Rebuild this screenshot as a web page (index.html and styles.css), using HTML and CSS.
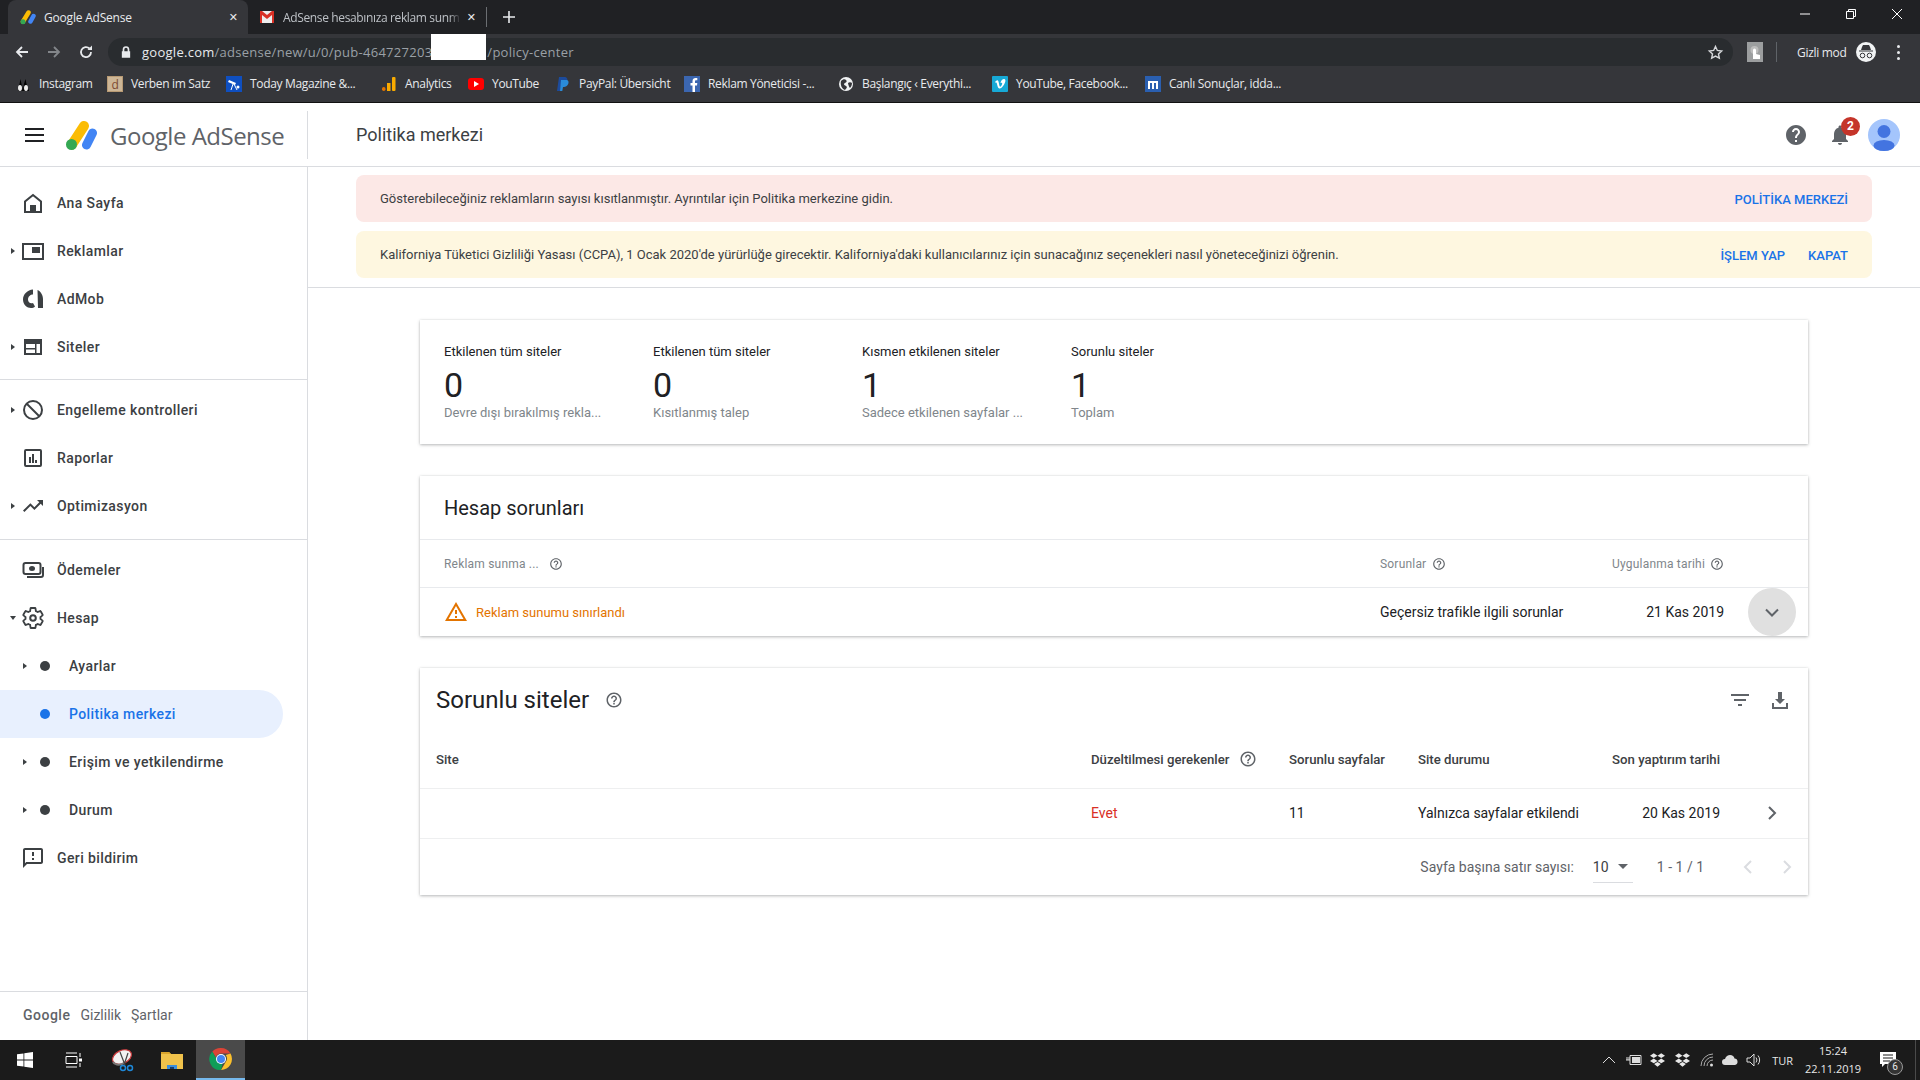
FILE: index.html
```html
<!DOCTYPE html>
<html lang="tr">
<head>
  <meta charset="UTF-8">
  <meta name="viewport" content="width=device-width, initial-scale=1.0">
  <title>Google AdSense</title>
  <link rel="stylesheet" href="styles.css">
</head>
<body>
  <svg class="sprite" width="0" height="0">
    <symbol id="help" viewBox="0 0 24 24"><path d="M11 18h2v-2h-2v2zm1-16C6.48 2 2 6.48 2 12s4.48 10 10 10 10-4.48 10-10S17.52 2 12 2zm0 18c-4.41 0-8-3.59-8-8s3.59-8 8-8 8 3.59 8 8-3.59 8-8 8zm0-14c-2.21 0-4 1.79-4 4h2c0-1.1.9-2 2-2s2 .9 2 2c0 2-3 1.75-3 5h2c0-2.25 3-2.5 3-5 0-2.21-1.79-4-4-4z"/></symbol>
    <symbol id="dropbox" viewBox="0 0 20 18"><path d="M5 0l5 3.2L5 6.4 0 3.2zM15 0l5 3.2-5 3.2-5-3.2zM5 7l5 3.2-5 3.2-5-3.2zM15 7l5 3.2-5 3.2-5-3.2zM10 11.5l4.5 2.9L10 18l-4.500-3.600z"/></symbol>
  </svg>

  <!-- browser chrome -->
  <div class="tabstrip">
    <div class="tab tab-active">
      <svg class="fav" viewBox="0 0 32 30"><path d="M6 24L17 6" stroke="#fbbc04" stroke-width="9" stroke-linecap="round"/><path d="M21 24l6-11" stroke="#4285f4" stroke-width="9" stroke-linecap="round"/><circle cx="6" cy="24.500" r="5" fill="#34a853"/></svg>
      <span class="tab-title">Google AdSense</span>
      <span class="tab-close">✕</span>
    </div>
    <div class="tab tab-other">
      <svg class="fav" viewBox="0 0 16 16"><rect x="1" y="2" width="14" height="12" fill="#eee"/><path d="M1 2h2l5 4 5-4h2v12h-2V6L8 10 3 6v8H1z" fill="#d93025"/></svg>
      <span class="tab-title tab-fade">AdSense hesabınıza reklam sunm</span>
      <span class="tab-close">✕</span>
    </div>
    <span class="tab-sep"></span>
    <span class="tab-new">
      <svg viewBox="0 0 14 14" width="14" height="14"><path d="M7 1v12M1 7h12" stroke="#e8eaed" stroke-width="1.600"/></svg>
    </span>
    <div class="win-controls">
      <svg viewBox="0 0 12 12" width="12" height="12"><path d="M1 6h10" stroke="#fff"/></svg>
      <svg viewBox="0 0 12 12" width="12" height="12"><path d="M1.500 3.500h7v7h-7zM3.500 3.500v-2h7v7h-2" fill="none" stroke="#fff"/></svg>
      <svg viewBox="0 0 12 12" width="12" height="12"><path d="M1 1l10 10M11 1L1 11" stroke="#fff"/></svg>
    </div>
  </div>

  <div class="toolbar">
    <div class="nav-btns">
      <svg viewBox="0 0 16 16" width="16" height="16"><path d="M14 8H3M8 3L3 8l5 5" fill="none" stroke="#e8eaed" stroke-width="1.800"/></svg>
      <svg viewBox="0 0 16 16" width="16" height="16"><path d="M2 8h11M8 3l5 5-5 5" fill="none" stroke="#83868a" stroke-width="1.800"/></svg>
      <svg viewBox="0 0 16 16" width="16" height="16"><path d="M13 8a5 5 0 1 1-1.500-3.500" fill="none" stroke="#e8eaed" stroke-width="1.800"/><path d="M14 1.500V6H9.500z" fill="#e8eaed"/></svg>
    </div>
    <div class="omnibox">
      <svg class="lock" viewBox="0 0 12 14" width="10" height="12"><path d="M2 6V4a4 4 0 0 1 8 0v2h1v8H1V6zm2 0h4V4a2 2 0 0 0-4 0z" fill="#e8eaed"/></svg>
      <span class="url"><b>google.com</b>/adsense/new/u/0/pub-464727203<span class="url-gap"></span>/policy-center</span>
      <svg class="star" viewBox="0 0 24 24" width="17" height="17"><path d="M12 3.500l2.600 5.600 6.100.7-4.500 4.200 1.200 6L12 17l-5.400 3 1.200-6-4.500-4.200 6.100-.7z" fill="none" stroke="#d5d7da" stroke-width="2"/></svg>
    </div>
    <div class="toolbar-right">
      <span class="ext-icon">
        <svg viewBox="0 0 16 16" width="16" height="16"><circle cx="7.500" cy="6" r="4" fill="#bdbdbd"/><path d="M6 15V6a1.500 1.500 0 0 1 3 0v4l4 1v4z" fill="#fff"/></svg>
      </span>
      <span class="toolbar-sep"></span>
      <span class="incog-label">Gizli mod</span>
      <span class="incog-icon">
        <svg viewBox="0 0 20 20" width="20" height="20"><path d="M6 5l1-2h6l1 2 1 3H5zM3 8.500h14v1H3z" fill="#35363a"/><circle cx="6.500" cy="13.500" r="2.300" fill="none" stroke="#35363a"/><circle cx="13.500" cy="13.500" r="2.300" fill="none" stroke="#35363a"/></svg>
      </span>
      <span class="kebab"><i></i><i></i><i></i></span>
    </div>
    <span class="redact"></span>
  </div>

  <div class="bookmarks">
    <a class="bm">
      <svg viewBox="0 0 16 16"><path d="M3 15l1.500-7 1-5 1 5 1.500 7z" fill="#000"/><path d="M8 15l1-7 1.500-5 1 5L14 15z" fill="#000"/><ellipse cx="5" cy="12" rx="2" ry="3" fill="#eee"/><ellipse cx="11" cy="12" rx="2" ry="3" fill="#eee"/></svg>
      <span>Instagram</span>
    </a>
    <a class="bm">
      <svg viewBox="0 0 16 16"><rect width="16" height="16" fill="#b89a74"/><rect x="1" y="1" width="14" height="14" fill="#cdb696"/><text x="4.500" y="12.500" font-size="12" fill="#7c4a32">d</text></svg>
      <span>Verben im Satz</span>
    </a>
    <a class="bm">
      <svg viewBox="0 0 16 16"><rect width="16" height="16" fill="#0f4fc0"/><path d="M3 4l7 3-1 2-7-3z" fill="#fff"/><path d="M7 8l-2 6M8 8l3 6" stroke="#fff"/><circle cx="12" cy="11" r="1.500" fill="#fff"/></svg>
      <span>Today Magazine &amp;...</span>
    </a>
    <a class="bm">
      <svg viewBox="0 0 16 16"><rect x="1" y="11" width="3.500" height="4" rx="1.700" fill="#e37400"/><rect x="6" y="7" width="3.500" height="8" fill="#f9ab00"/><rect x="11" y="1" width="3.500" height="14" rx="1" fill="#f9ab00"/></svg>
      <span>Analytics</span>
    </a>
    <a class="bm">
      <svg viewBox="0 0 16 16"><rect y="2" width="16" height="12" rx="3" fill="#f00"/><path d="M6 5l5 3-5 3z" fill="#fff"/></svg>
      <span>YouTube</span>
    </a>
    <a class="bm">
      <svg viewBox="0 0 16 16"><path d="M4 1h5c3 0 4 2 3 4.500S9 9 7.500 9H6l-1 6H2z" fill="#1c4b9c"/><path d="M6 4h5c2.500 0 3 2 2.200 4S10.500 11 9 11H8l-.7 4H5z" fill="#2a8bd8"/></svg>
      <span>PayPal: Übersicht</span>
    </a>
    <a class="bm">
      <svg viewBox="0 0 16 16"><rect width="16" height="16" fill="#3b66b0"/><path d="M11 16V9.500h2l.3-2.500H11V5.500c0-.8.300-1.200 1.200-1.200h1.100V2.100C13 2 12.300 2 11.600 2 9.800 2 8.500 3 8.500 5.200V7h-2v2.500h2V16z" fill="#fff"/></svg>
      <span>Reklam Yöneticisi -...</span>
    </a>
    <a class="bm">
      <svg viewBox="0 0 16 16"><circle cx="8" cy="8" r="7" fill="#f1f3f4"/><path d="M3 5c2-2 4-2 5-1s1 2-1 3-1 2 1 3 0 3-1 4C4 13 2 9 3 5zM10 7c1-1 3-1 4 0 0 2-1 4-2 5-1-1-2-4-2-5z" fill="#35363a"/></svg>
      <span>Başlangıç ‹ Everythi...</span>
    </a>
    <a class="bm">
      <svg viewBox="0 0 16 16"><rect width="16" height="16" rx="1" fill="#17a9d6"/><path d="M3 6l1-1c1-1 2-1 2.500.5L7.500 10c.5 1 1 1 1.500.3 1-1.500 1.500-3 1-3.500-.5-.3-1 0-1.500.3C9 4 10.500 3 12 3c1.500.2 1.800 1.500 1 3.500-1 2.500-3 5.500-5 6-1.500.3-2-1-2.500-2.500L4.700 7c-.2-.7-.5-.7-1-.3z" fill="#fff"/></svg>
      <span>YouTube, Facebook...</span>
    </a>
    <a class="bm">
      <svg viewBox="0 0 16 16"><rect width="16" height="16" fill="#2a5fb0"/><path d="M3 5h10v8h-2V7H9v6H7V7H5v6H3z" fill="#fff"/></svg>
      <span>Canlı Sonuçlar, idda...</span>
    </a>
  </div>

  <!-- adsense page -->
  <header class="app-header">
    <div class="brand">
      <svg class="menu-icon" viewBox="0 0 19 14" width="19" height="14"><path d="M0 1h19M0 7h19M0 13h19" stroke="#202124" stroke-width="2"/></svg>
      <svg class="logo" viewBox="0 0 32 30" width="32" height="30"><path d="M6 24.500L18 6" stroke="#fbbc04" stroke-width="10" stroke-linecap="round"/><path d="M20.500 25l6-12" stroke="#4285f4" stroke-width="9" stroke-linecap="round"/><circle cx="5.500" cy="24.500" r="5.500" fill="#34a853"/></svg>
      <span class="brand-name">Google AdSense</span>
    </div>
    <h1 class="page-title">Politika merkezi</h1>
    <div class="header-actions">
      <svg viewBox="0 0 24 24" width="24" height="24" fill="#5f6368"><path d="M12 2C6.480 2 2 6.480 2 12s4.480 10 10 10 10-4.480 10-10S17.520 2 12 2zm1 17h-2v-2h2v2zm2.070-7.750l-.9.920C13.450 12.900 13 13.500 13 15h-2v-.5c0-1.100.45-2.100 1.170-2.830l1.240-1.260c.37-.36.59-.86.59-1.410 0-1.100-.9-2-2-2s-2 .9-2 2H8c0-2.210 1.790-4 4-4s4 1.790 4 4c0 .880-.36 1.680-.93 2.250z"/></svg>
      <span class="bell">
        <svg viewBox="0 0 24 24" width="24" height="24" fill="#5f6368"><path d="M12 22c1.100 0 2-.9 2-2h-4c0 1.100.89 2 2 2zm6-6v-5c0-3.070-1.640-5.640-4.500-6.320V4c0-.83-.67-1.500-1.500-1.500s-1.500.67-1.500 1.500v.68C7.630 5.360 6 7.920 6 11v5l-2 2v1h16v-1l-2-2z"/></svg>
        <span class="badge">2</span>
      </span>
      <svg class="avatar" viewBox="0 0 32 32" width="32" height="32"><circle cx="16" cy="16" r="16" fill="#a4c5fc"/><circle cx="16" cy="12.500" r="6.500" fill="#4374e0"/><ellipse cx="16" cy="26.500" rx="10.500" ry="5.500" fill="#4374e0"/></svg>
    </div>
  </header>

  <div class="app-body">
    <nav class="sidebar">
      <div class="nav-group">
        <a class="nav-item">
          <span class="caret-slot"></span>
          <svg class="nav-icon" viewBox="0 0 24 24"><path d="M12 4l8 6.500V21H4V10.500z" fill="none" stroke="#3c4043" stroke-width="2"/><rect x="9" y="14" width="6" height="7" fill="#3c4043"/></svg>
          <span>Ana Sayfa</span>
        </a>
        <a class="nav-item">
          <span class="caret-slot"><i class="caret"></i></span>
          <svg class="nav-icon" viewBox="0 0 24 24"><rect x="2" y="5" width="20" height="15" fill="none" stroke="#3c4043" stroke-width="2"/><rect x="11" y="8" width="8" height="6" fill="#3c4043"/></svg>
          <span>Reklamlar</span>
        </a>
        <a class="nav-item">
          <span class="caret-slot"></span>
          <svg class="nav-icon" viewBox="0 0 24 24"><path d="M12 2.500C6.500 3 2 7 2 12.500c0 5 4 8.500 8 8.500 1.500 0 3-.5 4-1.500l-2-3.500c-2.500 1-5-.5-5-3.500s2.500-5 5-5zM16.500 3C19.500 4 22 8 22 12v9h-5z" fill="#3c4043"/></svg>
          <span>AdMob</span>
        </a>
        <a class="nav-item">
          <span class="caret-slot"><i class="caret"></i></span>
          <svg class="nav-icon" viewBox="0 0 24 24"><path d="M3 4h18v16H3zM5 9v4h9V9zm0 5.500V18h9v-3.500zM15.500 9v9H19V9z" fill="#3c4043" fill-rule="evenodd"/></svg>
          <span>Siteler</span>
        </a>
      </div>
      <div class="nav-group">
        <a class="nav-item">
          <span class="caret-slot"><i class="caret"></i></span>
          <svg class="nav-icon" viewBox="0 0 24 24"><circle cx="12" cy="12" r="9" fill="none" stroke="#3c4043" stroke-width="2"/><path d="M5.500 5.500l13 13" stroke="#3c4043" stroke-width="2"/></svg>
          <span>Engelleme kontrolleri</span>
        </a>
        <a class="nav-item">
          <span class="caret-slot"></span>
          <svg class="nav-icon" viewBox="0 0 24 24"><rect x="4" y="4" width="16" height="16" rx="1" fill="none" stroke="#3c4043" stroke-width="2"/><path d="M8 11h2v6H8zM11 8h2v9h-2zM14 14h2v3h-2z" fill="#3c4043"/></svg>
          <span>Raporlar</span>
        </a>
        <a class="nav-item">
          <span class="caret-slot"><i class="caret"></i></span>
          <svg class="nav-icon" viewBox="0 0 24 24"><path d="M16 6l2.290 2.290-4.880 4.880-4-4L2 16.590 3.410 18l6-6 4 4 6.300-6.290L22 12V6z" fill="#3c4043"/></svg>
          <span>Optimizasyon</span>
        </a>
      </div>
      <div class="nav-group nav-group-last">
        <a class="nav-item">
          <span class="caret-slot"></span>
          <svg class="nav-icon" viewBox="0 0 24 24"><rect x="2.500" y="5" width="17" height="11" rx="2" fill="none" stroke="#3c4043" stroke-width="2"/><ellipse cx="11" cy="10.500" rx="3" ry="2.500" fill="#3c4043"/><path d="M22 9v8c0 1-1 2-2 2H6" fill="none" stroke="#3c4043" stroke-width="2"/></svg>
          <span>Ödemeler</span>
        </a>
        <a class="nav-item">
          <span class="caret-slot"><i class="caret caret-down"></i></span>
          <svg class="nav-icon" viewBox="0 0 24 24"><path d="M19.430 12.980c.04-.32.07-.64.07-.98s-.03-.66-.07-.98l2.110-1.650c.19-.15.24-.42.12-.64l-2-3.460c-.12-.22-.39-.3-.61-.22l-2.490 1c-.52-.4-1.080-.73-1.690-.98l-.38-2.650C14.460 2.180 14.250 2 14 2h-4c-.25 0-.46.18-.49.42l-.38 2.650c-.61.25-1.170.59-1.690.98l-2.490-1c-.23-.09-.49 0-.61.22l-2 3.460c-.13.22-.07.49.12.64l2.110 1.650c-.04.32-.07.65-.07.98s.03.66.07.98l-2.110 1.650c-.19.15-.24.42-.12.64l2 3.460c.12.22.39.3.61.22l2.490-1c.52.4 1.080.73 1.690.98l.38 2.650c.03.24.24.42.49.42h4c.25 0 .46-.18.49-.42l.38-2.650c.61-.25 1.170-.59 1.690-.98l2.490 1c.23.09.49 0 .61-.22l2-3.460c.12-.22.07-.49-.12-.64z" fill="none" stroke="#3c4043" stroke-width="1.800"/><circle cx="12" cy="12" r="2.800" fill="none" stroke="#3c4043" stroke-width="2"/></svg>
          <span>Hesap</span>
        </a>
        <a class="nav-item nav-sub">
          <span class="caret-slot"><i class="caret"></i></span>
          <i class="dot"></i>
          <span>Ayarlar</span>
        </a>
        <a class="nav-item nav-sub nav-active">
          <span class="caret-slot"></span>
          <i class="dot"></i>
          <span>Politika merkezi</span>
        </a>
        <a class="nav-item nav-sub">
          <span class="caret-slot"><i class="caret"></i></span>
          <i class="dot"></i>
          <span>Erişim ve yetkilendirme</span>
        </a>
        <a class="nav-item nav-sub">
          <span class="caret-slot"><i class="caret"></i></span>
          <i class="dot"></i>
          <span>Durum</span>
        </a>
        <a class="nav-item">
          <span class="caret-slot"></span>
          <svg class="nav-icon" viewBox="0 0 24 24"><path d="M20 2H4c-1.100 0-2 .9-2 2v18l4-4h14c1.100 0 2-.9 2-2V4c0-1.100-.9-2-2-2zm0 14H5.170L4 17.170V4h16v12zM11 12h2v2h-2zm0-6h2v4h-2z" fill="#3c4043"/></svg>
          <span>Geri bildirim</span>
        </a>
      </div>
      <div class="sidebar-footer">
        <span class="footer-google">Google</span>
        <span>Gizlilik</span>
        <span>Şartlar</span>
      </div>
    </nav>

    <main class="content">
      <div class="banners">
        <div class="banner banner-red">
          <p>Gösterebileceğiniz reklamların sayısı kısıtlanmıştır. Ayrıntılar için Politika merkezine gidin.</p>
          <a class="banner-btn">POLİTİKA MERKEZİ</a>
        </div>
        <div class="banner banner-yellow">
          <p>Kaliforniya Tüketici Gizliliği Yasası (CCPA), 1 Ocak 2020'de yürürlüğe girecektir. Kaliforniya'daki kullanıcılarınız için sunacağınız seçenekleri nasıl yöneteceğinizi öğrenin.</p>
          <a class="banner-btn">İŞLEM YAP</a>
          <a class="banner-btn">KAPAT</a>
        </div>
      </div>

      <div class="cards">
        <section class="card stats">
          <div class="stat">
            <div class="stat-label">Etkilenen tüm siteler</div>
            <div class="stat-num">0</div>
            <div class="stat-sub">Devre dışı bırakılmış rekla...</div>
          </div>
          <div class="stat">
            <div class="stat-label">Etkilenen tüm siteler</div>
            <div class="stat-num">0</div>
            <div class="stat-sub">Kısıtlanmış talep</div>
          </div>
          <div class="stat">
            <div class="stat-label">Kısmen etkilenen siteler</div>
            <div class="stat-num">1</div>
            <div class="stat-sub">Sadece etkilenen sayfalar ...</div>
          </div>
          <div class="stat">
            <div class="stat-label">Sorunlu siteler</div>
            <div class="stat-num">1</div>
            <div class="stat-sub">Toplam</div>
          </div>
        </section>

        <section class="card">
          <h2 class="issues-title">Hesap sorunları</h2>
          <div class="issues-row issues-head">
            <span>Reklam sunma ... <svg class="help-sm help-far"><use href="#help"/></svg></span>
            <span>Sorunlar <svg class="help-sm"><use href="#help"/></svg></span>
            <span class="align-end">Uygulanma tarihi <svg class="help-sm"><use href="#help"/></svg></span>
          </div>
          <div class="issues-row issues-body">
            <span class="issue-status">
              <svg viewBox="0 0 24 24" width="24" height="24"><path d="M12 5.990L19.530 19H4.470L12 5.990M12 2L1 21h22L12 2zm1 14h-2v2h2v-2zm0-6h-2v4h2v-4z" fill="#e37400"/></svg>
              Reklam sunumu sınırlandı
            </span>
            <span>Geçersiz trafikle ilgili sorunlar</span>
            <span class="align-end">21 Kas 2019</span>
            <span class="expand-btn">
              <svg viewBox="0 0 24 24" width="24" height="24"><path d="M6 9.500l6 6 6-6" fill="none" stroke="#5f6368" stroke-width="2"/></svg>
            </span>
          </div>
        </section>

        <section class="card">
          <div class="sites-head">
            <h2 class="sites-title">Sorunlu siteler</h2>
            <svg class="help-md"><use href="#help"/></svg>
            <div class="sites-actions">
              <svg viewBox="0 0 24 24" width="24" height="24"><path d="M10 18h4v-2h-4v2zM3 6v2h18V6H3zm3 7h12v-2H6v2z" fill="#5f6368"/></svg>
              <svg viewBox="0 0 24 24" width="24" height="24"><path d="M12 16l-5-5h3V4h4v7h3zM4 15h2v4h12v-4h2v6H4z" fill="#5f6368"/></svg>
            </div>
          </div>
          <div class="sites-row sites-th">
            <span>Site</span>
            <span>Düzeltilmesi gerekenler <svg class="help-md"><use href="#help"/></svg></span>
            <span>Sorunlu sayfalar</span>
            <span>Site durumu</span>
            <span class="align-end">Son yaptırım tarihi</span>
          </div>
          <div class="sites-row sites-td">
            <span></span>
            <span class="text-red">Evet</span>
            <span>11</span>
            <span>Yalnızca sayfalar etkilendi</span>
            <span class="align-end">20 Kas 2019</span>
            <svg class="row-arrow" viewBox="0 0 24 24" width="24" height="24"><path d="M9 6l6 6-6 6" fill="none" stroke="#5f6368" stroke-width="2"/></svg>
          </div>
          <div class="pager">
            <span>Sayfa başına satır sayısı:</span>
            <span class="pager-select">10<i class="caret caret-down caret-lg"></i></span>
            <span class="pager-range">1 - 1 / 1</span>
            <svg viewBox="0 0 24 24" width="24" height="24"><path d="M15 6l-6 6 6 6" fill="none" stroke="#dadce0" stroke-width="2"/></svg>
            <svg viewBox="0 0 24 24" width="24" height="24"><path d="M9 6l6 6-6 6" fill="none" stroke="#dadce0" stroke-width="2"/></svg>
          </div>
        </section>
      </div>
    </main>
  </div>

  <!-- windows taskbar -->
  <footer class="taskbar">
    <div class="task-apps">
      <span class="task-app">
        <svg viewBox="0 0 16 16" width="16" height="16"><path d="M0 2.300l6.500-.9v6.200H0zM7.300 1.300L16 0v7.600H7.300zM0 8.400h6.500v6.200L0 13.700zM7.300 8.400H16V16l-8.700-1.300z" fill="#fff"/></svg>
      </span>
      <span class="task-app">
        <svg viewBox="0 0 18 16" width="18" height="16"><path d="M1 4.500h11v7H1zM1 1h11M1 15h11" fill="none" stroke="#fff"/><path d="M15 1v4M15 11v4" stroke="#fff"/><rect x="14" y="6.500" width="3" height="3" fill="#fff"/></svg>
      </span>
      <span class="task-app">
        <svg viewBox="0 0 24 24" width="24" height="24"><ellipse cx="11" cy="9" rx="10" ry="6.500" transform="rotate(-25 11 9)" fill="#f2f2f2" stroke="#c8383a" stroke-width="1.200"/><path d="M2 14c3 4 8 3 11 1" stroke="#777" stroke-width="2" fill="none"/><path d="M9 4l5 13M17 5l-4 12" stroke="#444" stroke-width="1.200"/><circle cx="12" cy="20" r="2.500" fill="none" stroke="#1e88d8" stroke-width="1.500"/><circle cx="19" cy="20" r="2.500" fill="none" stroke="#1e88d8" stroke-width="1.500"/></svg>
      </span>
      <span class="task-app">
        <svg viewBox="0 0 24 20" width="24" height="20"><path d="M1 2h8l2 2h12v15H1z" fill="#f0c24b"/><path d="M1 2h8l2 2H1z" fill="#d9a42c"/><path d="M7 15h10v4H7z" fill="#3b8edb"/><path d="M10 17h4v2h-4z" fill="#1a3a66"/></svg>
      </span>
      <span class="task-app task-active">
        <svg viewBox="0 0 24 24" width="24" height="24"><path d="M12 1a11 11 0 0 1 9.500 5.500H12a5.500 5.500 0 0 0-5.200 3.700L3.300 4.500A11 11 0 0 1 12 1z" fill="#db4437"/><path d="M21.500 6.500A11 11 0 0 1 12 23l5-8.500a5.500 5.500 0 0 0-.3-6.500z" fill="#fbc02d"/><path d="M12 23A11 11 0 0 1 3.300 4.500L8 12.800a5.500 5.500 0 0 0 5.500 4z" fill="#0f9d58"/><circle cx="12" cy="12" r="5" fill="#fff"/><circle cx="12" cy="12" r="4" fill="#4285f4"/></svg>
      </span>
    </div>
    <div class="tray">
      <svg viewBox="0 0 14 8" width="14" height="8"><path d="M1 7l6-6 6 6" fill="none" stroke="#ddd"/></svg>
      <svg class="tray-wide" viewBox="0 0 16 12" width="16" height="12"><path d="M4 1.500h11v9H4z" fill="none" stroke="#ddd"/><rect x="6" y="3" width="8" height="6" fill="#ddd"/><path d="M0 6h4M1 3v3M3 3v3" stroke="#ddd"/></svg>
      <svg class="tray-box" width="15" height="14"><use href="#dropbox"/></svg>
      <svg class="tray-box tray-wide" width="15" height="14"><use href="#dropbox"/></svg>
      <svg class="tray-wide" viewBox="0 0 14 14" width="14" height="14"><path d="M1 13A12 12 0 0 1 13 1M4 13a9 9 0 0 1 9-9M7 13a6 6 0 0 1 6-6" fill="none" stroke="#aaa"/><circle cx="11.500" cy="12" r="1.500" fill="#ddd"/></svg>
      <svg viewBox="0 0 16 10" width="16" height="10"><path d="M3 10a3 3 0 0 1 0-6c.7-2.500 3-4 5-4 2.500 0 4 1.500 4.500 3.500A3.300 3.300 0 0 1 13 10z" fill="#ddd"/></svg>
      <svg viewBox="0 0 16 14" width="16" height="14"><path d="M1 5h3l4-4v12l-4-4H1z" fill="none" stroke="#ddd"/><path d="M10 4.500a4 4 0 0 1 0 5M12 2.500a7 7 0 0 1 0 9" fill="none" stroke="#ddd"/></svg>
      <span class="tray-lang">TUR</span>
      <span class="tray-clock"><span>15:24</span><span>22.11.2019</span></span>
      <span class="tray-note">
        <svg viewBox="0 0 16 16" width="16" height="16"><path d="M0 0h16v12H5l-3 3v-3H0z" fill="#fff"/><path d="M3 3h10M3 6h10M3 9h7" stroke="#1b1b1b"/></svg>
        <span class="note-count">6</span>
      </span>
      <span class="tray-edge"></span>
    </div>
  </footer>
</body>
</html>
```

FILE: styles.css
```css
/* General */
* {
  box-sizing: border-box;
}

html, body {
  margin: 0;
  height: 1080px;
  overflow: hidden;
}

body {
  display: flex;
  flex-direction: column;
  font-family: Roboto, "Liberation Sans", sans-serif;
  color: #202124;
  background: #fff;
}

.sprite {
  position: absolute;
}

h1, h2, p {
  margin: 0;
  font-weight: 400;
}

/* Browser tabs */
.tabstrip {
  display: flex;
  align-items: flex-end;
  height: 34px;
  padding-left: 8px;
  background: #202124;
  color: #e8eaed;
  font-family: "Open Sans", sans-serif;
  font-size: 12px;
}

.tab {
  display: flex;
  align-items: center;
  height: 34px;
  padding: 0 10px 0 12px;
}

.tab-active {
  width: 240px;
  background: #35363a;
  border-radius: 8px 8px 0 0;
}

.tab-other {
  width: 238px;
  padding-left: 11px;
  color: #bdc1c6;
}

.fav {
  width: 16px;
  height: 16px;
  flex: none;
  margin-right: 8px;
  margin-left: 0;
}

.tab-title {
  flex: 1;
  white-space: nowrap;
  overflow: hidden;
  letter-spacing: -0.2px;
}

.tab-fade {
  letter-spacing: -0.36px;
  -webkit-mask-image: linear-gradient(to left, transparent, #000 12px);
  mask-image: linear-gradient(to left, transparent, #000 12px);
}

.tab-close {
  margin-left: 6px;
  font-size: 11px;
  font-family: "DejaVu Sans", sans-serif;
  color: #e8eaed;
}

.tab-sep {
  width: 1px;
  height: 20px;
  margin-bottom: 7px;
  background: #6b6e72;
}

.tab-new {
  display: flex;
  align-items: center;
  height: 34px;
  margin-left: 15px;
}

.win-controls {
  display: flex;
  align-items: center;
  gap: 34px;
  height: 28px;
  margin-left: auto;
  align-self: flex-start;
  padding-right: 17px;
}

/* Browser toolbar */
.toolbar {
  position: relative;
  display: flex;
  align-items: flex-end;
  height: 32px;
  background: #35363a;
  color: #e8eaed;
}

.nav-btns {
  display: flex;
  align-items: center;
  gap: 16px;
  width: 108px;
  height: 28px;
  padding-left: 14px;
}

.omnibox {
  display: flex;
  align-items: center;
  width: 1625px;
  height: 28px;
  padding: 0 9px 0 13px;
  border-radius: 14px;
  background: #292c2f;
}

.lock {
  margin-right: 11px;
}

.url {
  flex: 1;
  font-family: "Open Sans", sans-serif;
  font-size: 13px;
  letter-spacing: 0.27px;
  color: #9aa0a6;
  white-space: nowrap;
}

.url b {
  font-weight: 400;
  color: #e8eaed;
}

.url-gap {
  display: inline-block;
  width: 55px;
}

.redact {
  position: absolute;
  left: 431px;
  top: 0;
  width: 55px;
  height: 26px;
  background: #fff;
}

.toolbar-right {
  display: flex;
  align-items: center;
  flex: 1;
  height: 28px;
  padding-left: 14px;
}

.ext-icon {
  display: flex;
  align-items: center;
  justify-content: center;
  width: 16px;
  height: 20px;
  background: #9c9e9f;
}

.toolbar-sep {
  width: 1px;
  height: 20px;
  margin: 0 20px 0 13px;
  background: #5f6368;
}

.incog-label {
  font-family: "Open Sans", sans-serif;
  font-size: 12px;
  letter-spacing: -0.3px;
  color: #e8eaed;
  white-space: nowrap;
}

.incog-icon {
  display: flex;
  margin-left: 9px;
  border-radius: 50%;
  background: #f1f3f4;
}

.kebab {
  display: flex;
  flex-direction: column;
  gap: 3px;
  margin-left: 21px;
}

.kebab i {
  width: 3px;
  height: 3px;
  border-radius: 50%;
  background: #e8eaed;
}

/* Bookmarks */
.bookmarks {
  display: grid;
  grid-template-columns: 92px 119px 155px 87px 87px 129px 154px 154px 153px 1fr;
  align-items: center;
  height: 37px;
  padding: 0 0 1px 15px;
  background: #35363a;
  border-bottom: 1px solid #111;
}

.bm {
  display: flex;
  align-items: center;
  gap: 8px;
  font-family: "Open Sans", sans-serif;
  font-size: 12px;
  letter-spacing: -0.33px;
  color: #e8eaed;
  white-space: nowrap;
}

.bm svg {
  width: 16px;
  height: 16px;
  flex: none;
}

/* App header */
.app-header {
  display: flex;
  align-items: center;
  height: 64px;
  flex: none;
  border-bottom: 1px solid #dadce0;
}

.brand {
  display: flex;
  align-items: center;
  width: 308px;
  height: 48px;
  padding-left: 25px;
  border-right: 1px solid #dadce0;
}

.logo {
  margin-left: 22px;
  margin-right: 12px;
}

.brand-name {
  padding-top: 2px;
  font-family: "Open Sans", sans-serif;
  font-size: 24px;
  letter-spacing: -0.5px;
  color: #5f6368;
  white-space: nowrap;
}

.page-title {
  margin-left: 48px;
  font-size: 18px;
  color: #3c4043;
}

.header-actions {
  display: flex;
  align-items: center;
  margin-left: auto;
  padding-right: 20px;
  gap: 20px;
}

.bell {
  position: relative;
  display: flex;
}

.badge {
  position: absolute;
  top: -6px;
  left: 13px;
  width: 19px;
  height: 19px;
  border-radius: 50%;
  background: #c5352a;
  color: #fff;
  font-size: 12px;
  font-weight: 700;
  line-height: 19px;
  text-align: center;
}

.avatar {
  margin-left: -4px;
}

/* Sidebar */
.app-body {
  display: flex;
  flex: 1;
  min-height: 0;
}

.sidebar {
  display: flex;
  flex-direction: column;
  flex: none;
  width: 308px;
  border-right: 1px solid #dadce0;
}

.nav-group {
  padding: 12px 0 8px;
  border-bottom: 1px solid #dadce0;
}

.nav-group + .nav-group {
  padding: 6px 0 9px;
}

.nav-group-last {
  flex: 1;
  border-bottom: 0;
}

.nav-item {
  display: flex;
  align-items: center;
  height: 48px;
  width: 283px;
  padding-left: 11px;
  font-size: 14px;
  font-weight: 500;
  letter-spacing: 0.4px;
  color: #3c4043;
}

.caret-slot {
  display: flex;
  align-items: center;
  width: 10px;
  flex: none;
}

.caret {
  width: 0;
  height: 0;
  border-left: 4px solid #3c4043;
  border-top: 3.500px solid transparent;
  border-bottom: 3.500px solid transparent;
}

.caret-down {
  margin-left: -1px;
  border-top: 4px solid #3c4043;
  border-left: 3.500px solid transparent;
  border-right: 3.500px solid transparent;
  border-bottom: 0;
}

.caret-lg {
  margin-left: 9px;
  border-top-width: 5px;
  border-left-width: 5px;
  border-right-width: 5px;
  border-top-color: #5f6368;
}

.nav-icon {
  width: 24px;
  height: 24px;
  flex: none;
  margin-right: 12px;
}

.nav-sub {
  padding-left: 23px;
}

.dot {
  width: 10px;
  height: 10px;
  flex: none;
  margin-left: 7px;
  margin-right: 19px;
  border-radius: 50%;
  background: #3c4043;
}

.nav-active {
  border-radius: 0 24px 24px 0;
  background: #e8f0fe;
  color: #1a73e8;
}

.nav-active .dot {
  background: #1a73e8;
}

.sidebar-footer {
  display: flex;
  align-items: center;
  gap: 10px;
  height: 49px;
  padding: 0 0 2px 23px;
  border-top: 1px solid #dadce0;
  font-size: 14px;
  color: #5f6368;
}

.footer-google {
  font-weight: 500;
  letter-spacing: 0.5px;
}

/* Main content */
.content {
  flex: 1;
  min-width: 0;
}

.banners {
  display: flex;
  flex-direction: column;
  gap: 9px;
  padding: 8px 48px 9px;
  border-bottom: 1px solid #dadce0;
}

.banner {
  display: flex;
  align-items: center;
  gap: 23px;
  height: 47px;
  padding: 0 24px;
  border-radius: 8px;
  font-size: 13px;
  color: #3c4043;
}

.banner p {
  flex: 1;
}

.banner-red {
  background: #fce8e6;
}

.banner-yellow {
  background: #fef7e0;
}

.banner-btn {
  padding-top: 2px;
  font-size: 13px;
  font-weight: 500;
  color: #1a73e8;
}

.cards {
  display: flex;
  flex-direction: column;
  gap: 32px;
  padding: 32px 112px 0;
}

.card {
  background: #fff;
  box-shadow: 0 1px 3px rgba(60, 64, 67, 0.35), 0 0 2px rgba(60, 64, 67, 0.1);
}

.align-end {
  text-align: right;
  white-space: nowrap;
}

/* Summary card */
.stats {
  display: flex;
  height: 124px;
  padding: 23px 0 0 24px;
}

.stat {
  width: 209px;
  padding-right: 32px;
}

.stat-label {
  font-size: 13px;
  line-height: 18px;
  color: #202124;
}

.stat-num {
  margin-top: 5px;
  font-size: 34px;
  line-height: 38px;
  color: #202124;
}

.stat-sub {
  font-size: 13px;
  line-height: 18px;
  color: #80868b;
  white-space: nowrap;
}

/* Account issues card */
.issues-title {
  height: 64px;
  padding-left: 24px;
  font-size: 20px;
  line-height: 65px;
  border-bottom: 1px solid #e8eaed;
}

.issues-row {
  display: grid;
  grid-template-columns: 936px 232px 112px 1fr;
  align-items: center;
  padding-left: 24px;
  font-size: 14px;
}

.issues-head {
  height: 48px;
  font-size: 12px;
  letter-spacing: 0.2px;
  color: #80868b;
  border-bottom: 1px solid #e8eaed;
}

.issues-body {
  height: 48px;
}

.issue-status {
  display: flex;
  align-items: center;
  gap: 8px;
  font-size: 13px;
  color: #e37400;
}

.help-sm {
  width: 14px;
  height: 14px;
  margin-left: 2px;
  vertical-align: -3px;
  fill: #5f6368;
}

.help-far {
  margin-left: 7px;
}

.help-md {
  width: 18px;
  height: 18px;
  margin-left: 6px;
  vertical-align: -4px;
  fill: #5f6368;
}

.expand-btn {
  display: flex;
  align-items: center;
  justify-content: center;
  width: 48px;
  height: 48px;
  margin-left: 24px;
  border-radius: 50%;
  background: #e0e0e0;
}

/* Sites card */
.sites-head {
  display: flex;
  align-items: center;
  height: 64px;
  padding: 0 16px;
}

.sites-title {
  font-size: 24px;
}

.sites-head .help-md {
  margin-left: 16px;
  vertical-align: 0;
}

.sites-actions {
  display: flex;
  gap: 16px;
  margin-left: auto;
}

.sites-row {
  display: grid;
  grid-template-columns: 655px 198px 129px 194px 108px 1fr;
  align-items: center;
  padding-left: 16px;
  font-size: 14px;
  border-bottom: 1px solid #eeeff0;
}

.sites-th {
  height: 57px;
  padding-bottom: 2px;
  font-size: 13.200px;
  font-weight: 500;
  color: #3c4043;
}

.sites-td {
  height: 50px;
  padding-bottom: 2px;
}

.text-red {
  color: #d93025;
}

.row-arrow {
  margin-left: 40px;
}

.pager {
  display: flex;
  align-items: center;
  justify-content: flex-end;
  height: 56px;
  padding-right: 9px;
  font-size: 14px;
  color: #5f6368;
}

.pager-select {
  display: flex;
  align-items: center;
  width: 40px;
  height: 32px;
  margin: 0 24px 0 19px;
  color: #3c4043;
  border-bottom: 1px solid #dadce0;
}

.pager-range {
  margin-right: 32px;
}

.pager svg + svg {
  margin-left: 15px;
}

/* Windows taskbar */
.taskbar {
  display: flex;
  align-items: center;
  justify-content: space-between;
  height: 40px;
  flex: none;
  background: #1b1b1b;
  color: #e8e8e8;
}

.task-apps {
  display: flex;
  height: 100%;
}

.task-app {
  display: flex;
  align-items: center;
  justify-content: center;
  width: 49px;
  height: 100%;
}

.task-active {
  background: #4a4a4a;
  border-bottom: 2px solid #76b9ed;
}

.tray {
  display: flex;
  align-items: center;
  gap: 8px;
  height: 100%;
  padding-right: 4px;
}

.tray-wide {
  margin-left: 2px;
}

.tray-box {
  fill: #e8e8e8;
}

.tray-lang {
  margin-left: 2px;
  font-family: "Open Sans", sans-serif;
  font-size: 11px;
}

.tray-clock {
  display: flex;
  flex-direction: column;
  align-items: center;
  width: 64px;
  font-family: "Open Sans", sans-serif;
  font-size: 11px;
  line-height: 18px;
}

.tray-note {
  position: relative;
  display: flex;
  width: 34px;
  padding-left: 7px;
}

.note-count {
  position: absolute;
  left: 14px;
  top: 7px;
  width: 16px;
  height: 16px;
  border: 1px solid #999;
  border-radius: 50%;
  background: #333;
  font-size: 10px;
  line-height: 14px;
  text-align: center;
}

.tray-edge {
  width: 1px;
  height: 100%;
  background: #4a4a4a;
}
```
